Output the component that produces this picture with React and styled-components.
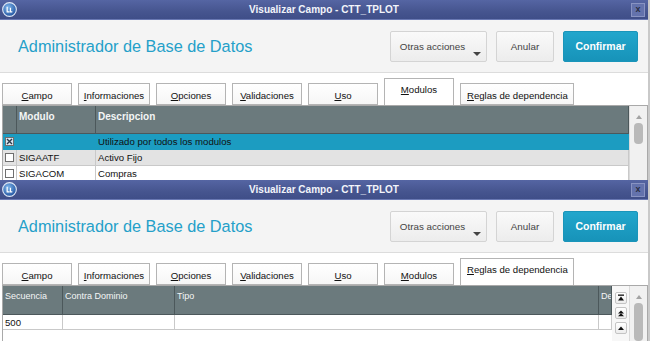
import React from 'react'
import styled, { createGlobalStyle } from 'styled-components'

const Global = createGlobalStyle`
  html, body {
    margin: 0;
    padding: 0;
    background: #fff;
  }
  body {
    font-family: "Liberation Sans", Arial, sans-serif;
    width: 650px;
    height: 341px;
    overflow: hidden;
  }
`

const Page = styled.div`
  display: flex;
  flex-direction: column;
  height: 341px;
  overflow: hidden;
`

const Window = styled.div`
  flex: none;
  height: ${p => p.$h}px;
  display: flex;
  flex-direction: column;
  overflow: hidden;
  background: #fff;
  border-right: 2px solid #c9c9c9;
`

const TitleBar = styled.div`
  flex: none;
  height: 20px;
  display: grid;
  grid-template-columns: 20px 1fr 20px;
  align-items: center;
  background: linear-gradient(#5565a3, #46558f 60%, #3f4e88);
  border-bottom: 1px solid #6a79b3;
  box-sizing: border-box;
`

const Title = styled.div`
  text-align: center;
  color: #f2f4fa;
  font-size: 10px;
  font-weight: bold;
`

const AppIcon = styled.svg`
  width: 15px;
  height: 15px;
  margin-left: 2px;
`

const CloseBtn = styled.div`
  width: 14px;
  height: 14px;
  box-sizing: border-box;
  border: 1px solid #8893c2;
  background: #6372ac;
  color: #2a2f45;
  font-size: 9px;
  font-weight: bold;
  line-height: 11px;
  text-align: center;
  justify-self: end;
  margin-right: 3px;
`

const Header = styled.div`
  flex: none;
  height: 53px;
  box-sizing: border-box;
  display: flex;
  align-items: center;
  justify-content: space-between;
  padding: 0 10px 0 18px;
  background: #f4f4f4;
  border-bottom: 1px solid #dcdcdc;
`

const AppName = styled.div`
  color: #24a0c9;
  font-size: 16.3px;
`

const Actions = styled.div`
  display: flex;
  gap: 9px;
`

const Button = styled.div`
  position: relative;
  height: 31px;
  width: ${p => p.$w}px;
  box-sizing: border-box;
  display: flex;
  align-items: center;
  justify-content: center;
  border-radius: 2px;
  font-size: ${p => (p.$primary ? '10.5px' : '9.8px')};
  font-weight: ${p => (p.$primary ? 'bold' : 'normal')};
  color: ${p => (p.$primary ? '#fff' : '#444')};
  background: ${p => (p.$primary ? 'linear-gradient(#22a6cc, #1793b9)' : 'linear-gradient(#fafafa, #ececec)')};
  border: 1px solid ${p => (p.$primary ? '#1a95ba' : '#d4d4d4')};
  padding-right: ${p => (p.$menu ? '12px' : '0')};
`

const Caret = styled.span`
  position: absolute;
  right: 5px;
  bottom: 5px;
  width: 0;
  height: 0;
  border-left: 4px solid transparent;
  border-right: 4px solid transparent;
  border-top: 4px solid #444;
`

const Body = styled.div`
  flex: 1;
  display: flex;
  flex-direction: column;
  min-height: 0;
`

const TabRow = styled.div`
  flex: none;
  height: 32px;
  display: flex;
  align-items: flex-end;
  gap: 6px;
  padding-left: 2px;
`

const Tab = styled.div`
  width: ${p => p.$w}px;
  height: ${p => (p.$active ? 27 : 22)}px;
  box-sizing: border-box;
  border: 1px solid #b4b4b4;
  border-bottom: ${p => (p.$active ? 'none' : '1px solid #b4b4b4')};
  background: ${p => (p.$active ? '#fff' : 'linear-gradient(#ffffff, #f6f6f6)')};
  font-size: 9.6px;
  color: #111;
  text-align: center;
  padding-top: ${p => (p.$active ? 5 : 6)}px;
  ${p => p.$left && 'text-align: left; padding-left: 6px;'}
`

const Grid = styled.div`
  flex: 1;
  min-height: 0;
  display: flex;
  margin: 0 0 0 2px;
  border: 1px solid #a9a9a9;
  border-bottom: none;
`

const Table = styled.div`
  flex: 1;
  display: flex;
  flex-direction: column;
  min-width: 0;
`

const Row = styled.div`
  flex: none;
  display: grid;
  grid-template-columns: ${p => p.$cols};
  height: ${p => p.$h}px;
  box-sizing: border-box;
  background: ${p => p.$bg || '#fff'};
  border-bottom: 1px solid ${p => p.$line || '#c9c9c9'};
`

const HeadCell = styled.div`
  background: #6b7a7d;
  color: #f4f6f6;
  font-size: ${p => (p.$bold ? '10px' : '9px')};
  font-weight: ${p => (p.$bold ? 'bold' : 'normal')};
  padding: 5px 0 0 2px;
  border-right: 1px solid #4c585b;
  overflow: hidden;
  white-space: nowrap;
`

const Cell = styled.div`
  font-size: 9.6px;
  color: #111;
  padding-left: 2px;
  line-height: 15px;
  border-right: 1px solid ${p => p.$line || '#c9c9c9'};
  overflow: hidden;
  white-space: nowrap;
  display: flex;
  align-items: center;
  ${p => p.$center && 'justify-content: center; padding-left: 0;'}
`

const Check = styled.span`
  width: 9px;
  height: 9px;
  box-sizing: border-box;
  border: 1px solid #6f6f6f;
  background: ${p => (p.$on ? '#dce8f2' : '#fff')};
  display: flex;
  align-items: center;
  justify-content: center;
`

const SideTools = styled.div`
  flex: none;
  width: 17px;
  display: flex;
  flex-direction: column;
  align-items: center;
  gap: 3px;
  padding-top: 6px;
  background: #f7f7f7;
`

const ToolBtn = styled.div`
  width: 12px;
  height: 12px;
  box-sizing: border-box;
  border: 1px solid #c4c4c4;
  border-radius: 2px;
  background: linear-gradient(#ffffff, #ececec);
  display: flex;
  align-items: center;
  justify-content: center;
`

const Scrollbar = styled.div`
  flex: none;
  width: 17px;
  display: flex;
  flex-direction: column;
  align-items: center;
  padding-top: ${p => p.$top}px;
  gap: 4px;
  background: #f1f1f1;
  border-left: 1px solid #dadada;
`

const Arrow = styled.span`
  width: 0;
  height: 0;
  border-left: 3px solid transparent;
  border-right: 3px solid transparent;
  border-bottom: 4px solid #a3a3a3;
`

const Thumb = styled.span`
  width: 9px;
  height: ${p => p.$h}px;
  border-radius: 4px;
  background: #b9b9b9;
`

const tabs = [
  ['C', 'ampo', 70],
  ['I', 'nformaciones', 72],
  ['O', 'pciones', 70],
  ['V', 'alidaciones', 70],
  ['U', 'so', 70],
  ['M', 'odulos', 70],
  ['R', 'eglas de dependencia', 114],
]

function Tabs({ active }) {
  return (
    <TabRow>
      {tabs.map(([k, rest, w], i) => (
        <Tab key={k} $w={w} $active={i === active} $left={i === 6}>
          <u>{k}</u>{rest}
        </Tab>
      ))}
    </TabRow>
  )
}

function WindowTop() {
  return (
    <>
      <TitleBar>
        <AppIcon viewBox="0 0 16 16">
          <defs>
            <radialGradient id="ig" cx="0.4" cy="0.35" r="0.7">
              <stop offset="0" stopColor="#7fb6ec" />
              <stop offset="1" stopColor="#1d4f9c" />
            </radialGradient>
          </defs>
          <circle cx="8" cy="8" r="7.3" fill="url(#ig)" stroke="#dfe8f6" strokeWidth="1.2" />
          <path d="M5.5 5 v5.5 h2.5 M9 6 v4.5 h2" stroke="#fff" strokeWidth="1.3" fill="none" />
        </AppIcon>
        <Title>Visualizar Campo - CTT_TPLOT</Title>
        <CloseBtn>x</CloseBtn>
      </TitleBar>
      <Header>
        <AppName>Administrador de Base de Datos</AppName>
        <Actions>
          <Button $w={97} $menu>Otras acciones<Caret /></Button>
          <Button $w={58}>Anular</Button>
          <Button $w={75} $primary>Confirmar</Button>
        </Actions>
      </Header>
    </>
  )
}

const XMark = () => (
  <svg width="7" height="7" viewBox="0 0 7 7">
    <path d="M1 1 L6 6 M6 1 L1 6" stroke="#2b3a4a" strokeWidth="1.4" />
  </svg>
)

const modCols = '14px 79px 1fr'
const modules = [
  { code: '', desc: 'Utilizado por todos los modulos', on: true, bg: '#1c9cc1', line: '#1c9cc1' },
  { code: 'SIGAATF', desc: 'Activo Fijo', bg: '#e3e3e3' },
  { code: 'SIGACOM', desc: 'Compras' },
]

const ruleCols = '60px 112px 1fr 13px'

const UpIcon = ({ bar, double }) => (
  <svg width="8" height="8" viewBox="0 0 8 8">
    {bar && <rect x="1" y="0.5" width="6" height="1.3" fill="#111" />}
    {double && <path d="M4 1.5 L7 4.5 H1 Z" fill="#111" />}
    <path d={double ? 'M4 4.2 L7 7.2 H1 Z' : bar ? 'M4 2.5 L7 6.5 H1 Z' : 'M4 2.5 L7 6 H1 Z'} fill="#111" />
  </svg>
)

export default function App() {
  return (
    <Page>
      <Global />
      <Window $h={180}>
        <WindowTop />
        <Body>
          <Tabs active={5} />
          <Grid>
            <Table>
              <Row $cols={modCols} $h={28} $line="#4c585b">
                <HeadCell $bold />
                <HeadCell $bold>Modulo</HeadCell>
                <HeadCell $bold>Descripcion</HeadCell>
              </Row>
              {modules.map(m => (
                <Row key={m.desc} $cols={modCols} $h={16} $bg={m.bg} $line={m.line}>
                  <Cell $center $line={m.line}>
                    <Check $on={m.on}>{m.on && <XMark />}</Check>
                  </Cell>
                  <Cell $line={m.line}>{m.code}</Cell>
                  <Cell $line={m.line}>{m.desc}</Cell>
                </Row>
              ))}
            </Table>
            <Scrollbar $top={9}>
              <Arrow />
              <Thumb $h={21} />
            </Scrollbar>
          </Grid>
        </Body>
      </Window>
      <Window $h={161}>
        <WindowTop />
        <Body>
          <Tabs active={6} />
          <Grid>
            <Table>
              <Row $cols={ruleCols} $h={29} $line="#4c585b">
                <HeadCell>Secuencia</HeadCell>
                <HeadCell>Contra Dominio</HeadCell>
                <HeadCell>Tipo</HeadCell>
                <HeadCell>Des</HeadCell>
              </Row>
              <Row $cols={ruleCols} $h={15}>
                <Cell>500</Cell>
                <Cell />
                <Cell />
                <Cell />
              </Row>
            </Table>
            <SideTools>
              <ToolBtn><UpIcon bar /></ToolBtn>
              <ToolBtn><UpIcon double /></ToolBtn>
              <ToolBtn><UpIcon /></ToolBtn>
            </SideTools>
            <Scrollbar $top={9}>
              <Arrow />
              <Thumb $h={40} />
            </Scrollbar>
          </Grid>
        </Body>
      </Window>
    </Page>
  )
}
